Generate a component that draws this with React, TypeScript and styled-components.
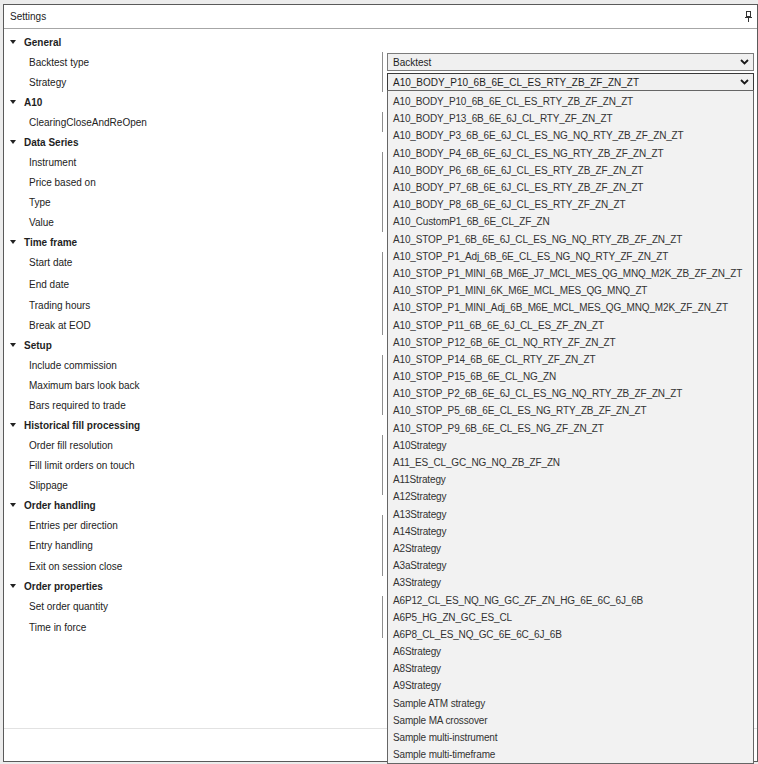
import React from "react";
import styled, { createGlobalStyle } from "styled-components";

const GlobalStyle = createGlobalStyle`
  html, body {
    margin: 0;
    padding: 0;
    background: #ececec;
    font-family: "Liberation Sans", Arial, sans-serif;
  }
  * { box-sizing: border-box; }
`;

const Page = styled.div`
  width: 758px;
  height: 764px;
  padding: 4px 0 0 3px;
  background: #ececec;
`;

const Panel = styled.div`
  position: relative;
  width: 755px;
  height: 758px;
  border: 1px solid #5a5a5a;
  background: #ffffff;
  display: flex;
  flex-direction: column;
`;

const Header = styled.div`
  height: 24px;
  flex: none;
  display: flex;
  align-items: center;
  justify-content: space-between;
  padding: 0 5px 1px 6px;
  border-bottom: 1px solid #a6a6a6;
`;

const Title = styled.span`
  font-size: 10px;
  color: #222;
`;

const Grid = styled.div`
  flex: 1;
  padding-top: 3px;
  display: flex;
  flex-direction: column;
`;

const CategoryRow = styled.div`
  height: 20px;
  display: flex;
  align-items: center;
  gap: 8px;
  padding-left: 6px;
  font-size: 10px;
  font-weight: bold;
  color: #1e1e1e;
`;

const Caret = styled.span`
  width: 0;
  height: 0;
  border-left: 3.5px solid transparent;
  border-right: 3.5px solid transparent;
  border-top: 4px solid #222;
`;

const PropertyRow = styled.div<{ $h: number }>`
  height: ${(p) => p.$h}px;
  display: flex;
  align-items: stretch;
`;

const NameCell = styled.div`
  width: 378px;
  flex: none;
  display: flex;
  align-items: center;
  padding-left: 25px;
  font-size: 10px;
  color: #222;
`;

const ValueCell = styled.div`
  flex: 1;
  border-left: 1px solid #8e8e8e;
  display: flex;
  align-items: center;
  padding: 0 3px 0 4px;
`;

const SelectBox = styled.div<{ $focused?: boolean }>`
  position: relative;
  width: 100%;
  height: 18px;
  display: flex;
  align-items: center;
  justify-content: space-between;
  padding: 0 4px 0 5px;
  background: #f0f0f0;
  border: 1px solid ${(p) => (p.$focused ? "#3a3a3a" : "#7c7c7c")};
  font-size: 10px;
  color: #1e1e1e;
`;

const DropList = styled.div`
  position: absolute;
  top: 100%;
  left: -1px;
  right: -1px;
  z-index: 10;
  padding-top: 2px;
  background: #f2f2f2;
  border: 1px solid #666;
  display: flex;
  flex-direction: column;
`;

const DropItem = styled.div`
  height: 17.2px;
  display: flex;
  align-items: center;
  padding-left: 5px;
  font-size: 10px;
  letter-spacing: -0.15px;
  color: #333;
  white-space: nowrap;
`;

const Footer = styled.div`
  height: 33px;
  flex: none;
  border-top: 1px solid #e2e2e2;
`;

const Chevron = () => (
  <svg width="9" height="6" viewBox="0 0 9 6">
    <polyline points="1,1 4.5,4.5 8,1" fill="none" stroke="#1a1a1a" strokeWidth="1.8" />
  </svg>
);

const Pin = () => (
  <svg width="7" height="11" viewBox="0 0 7 11">
    <rect x="1.5" y="0.5" width="4" height="5" fill="none" stroke="#333" strokeWidth="1" />
    <line x1="0" y1="6.5" x2="7" y2="6.5" stroke="#333" strokeWidth="1" />
    <line x1="3.5" y1="6.5" x2="3.5" y2="11" stroke="#333" strokeWidth="1" />
  </svg>
);

const strategies = [
  "A10_BODY_P10_6B_6E_CL_ES_RTY_ZB_ZF_ZN_ZT",
  "A10_BODY_P13_6B_6E_6J_CL_RTY_ZF_ZN_ZT",
  "A10_BODY_P3_6B_6E_6J_CL_ES_NG_NQ_RTY_ZB_ZF_ZN_ZT",
  "A10_BODY_P4_6B_6E_6J_CL_ES_NG_RTY_ZB_ZF_ZN_ZT",
  "A10_BODY_P6_6B_6E_6J_CL_ES_RTY_ZB_ZF_ZN_ZT",
  "A10_BODY_P7_6B_6E_6J_CL_ES_RTY_ZB_ZF_ZN_ZT",
  "A10_BODY_P8_6B_6E_6J_CL_ES_RTY_ZF_ZN_ZT",
  "A10_CustomP1_6B_6E_CL_ZF_ZN",
  "A10_STOP_P1_6B_6E_6J_CL_ES_NG_NQ_RTY_ZB_ZF_ZN_ZT",
  "A10_STOP_P1_Adj_6B_6E_CL_ES_NG_NQ_RTY_ZF_ZN_ZT",
  "A10_STOP_P1_MINI_6B_M6E_J7_MCL_MES_QG_MNQ_M2K_ZB_ZF_ZN_ZT",
  "A10_STOP_P1_MINI_6K_M6E_MCL_MES_QG_MNQ_ZT",
  "A10_STOP_P1_MINI_Adj_6B_M6E_MCL_MES_QG_MNQ_M2K_ZF_ZN_ZT",
  "A10_STOP_P11_6B_6E_6J_CL_ES_ZF_ZN_ZT",
  "A10_STOP_P12_6B_6E_CL_NQ_RTY_ZF_ZN_ZT",
  "A10_STOP_P14_6B_6E_CL_RTY_ZF_ZN_ZT",
  "A10_STOP_P15_6B_6E_CL_NG_ZN",
  "A10_STOP_P2_6B_6E_6J_CL_ES_NG_NQ_RTY_ZB_ZF_ZN_ZT",
  "A10_STOP_P5_6B_6E_CL_ES_NG_RTY_ZB_ZF_ZN_ZT",
  "A10_STOP_P9_6B_6E_CL_ES_NG_ZF_ZN_ZT",
  "A10Strategy",
  "A11_ES_CL_GC_NG_NQ_ZB_ZF_ZN",
  "A11Strategy",
  "A12Strategy",
  "A13Strategy",
  "A14Strategy",
  "A2Strategy",
  "A3aStrategy",
  "A3Strategy",
  "A6P12_CL_ES_NQ_NG_GC_ZF_ZN_HG_6E_6C_6J_6B",
  "A6P5_HG_ZN_GC_ES_CL",
  "A6P8_CL_ES_NQ_GC_6E_6C_6J_6B",
  "A6Strategy",
  "A8Strategy",
  "A9Strategy",
  "Sample ATM strategy",
  "Sample MA crossover",
  "Sample multi-instrument",
  "Sample multi-timeframe",
];

type Prop = { name: string; h?: number; value?: "backtest" | "strategy" };
type Section = { title: string; props: Prop[] };

const sections: Section[] = [
  {
    title: "General",
    props: [
      { name: "Backtest type", value: "backtest" },
      { name: "Strategy", value: "strategy" },
    ],
  },
  { title: "A10", props: [{ name: "ClearingCloseAndReOpen" }] },
  {
    title: "Data Series",
    props: [{ name: "Instrument" }, { name: "Price based on" }, { name: "Type" }, { name: "Value" }],
  },
  {
    title: "Time frame",
    props: [
      { name: "Start date", h: 21 },
      { name: "End date", h: 22 },
      { name: "Trading hours" },
      { name: "Break at EOD" },
    ],
  },
  {
    title: "Setup",
    props: [{ name: "Include commission" }, { name: "Maximum bars look back" }, { name: "Bars required to trade" }],
  },
  {
    title: "Historical fill processing",
    props: [{ name: "Order fill resolution" }, { name: "Fill limit orders on touch" }, { name: "Slippage" }],
  },
  {
    title: "Order handling",
    props: [{ name: "Entries per direction" }, { name: "Entry handling", h: 21 }, { name: "Exit on session close" }],
  },
  {
    title: "Order properties",
    props: [{ name: "Set order quantity", h: 21 }, { name: "Time in force", h: 21 }],
  },
];

const renderValue = (v?: Prop["value"]) => {
  if (v === "backtest") {
    return (
      <SelectBox>
        <span>Backtest</span>
        <Chevron />
      </SelectBox>
    );
  }
  if (v === "strategy") {
    return (
      <SelectBox $focused>
        <span>{strategies[0]}</span>
        <Chevron />
        <DropList>
          {strategies.map((s) => (
            <DropItem key={s}>{s}</DropItem>
          ))}
        </DropList>
      </SelectBox>
    );
  }
  return null;
};

export default function App() {
  return (
    <>
      <GlobalStyle />
      <Page>
        <Panel>
          <Header>
            <Title>Settings</Title>
            <Pin />
          </Header>
          <Grid>
            {sections.map((sec) => (
              <React.Fragment key={sec.title}>
                <CategoryRow>
                  <Caret />
                  <span>{sec.title}</span>
                </CategoryRow>
                {sec.props.map((p) => (
                  <PropertyRow key={p.name} $h={p.h ?? 20}>
                    <NameCell>{p.name}</NameCell>
                    <ValueCell>{renderValue(p.value)}</ValueCell>
                  </PropertyRow>
                ))}
              </React.Fragment>
            ))}
          </Grid>
          <Footer />
        </Panel>
      </Page>
    </>
  );
}
